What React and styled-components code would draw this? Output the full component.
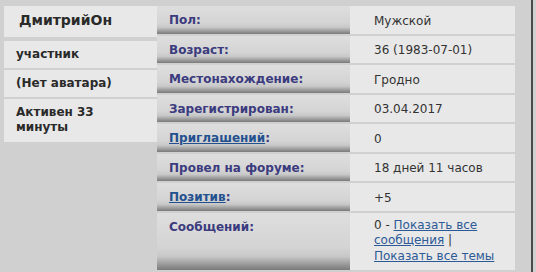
import React from "react";
import styled, { createGlobalStyle } from "styled-components";

const Global = createGlobalStyle`
  html, body { margin: 0; padding: 0; background: #d0d0d0; }
  body { font-family: "DejaVu Sans", Verdana, sans-serif; }
`;

const Page = styled.div`
  width: 533px;
  height: 272px;
  border-right: 2px solid #4a4a4a;
  display: flex;
  align-items: flex-start;
  padding: 6px 0 0 4px;
  box-sizing: border-box;
  background: #d0d0d0;
`;

const Side = styled.div`
  width: 153px;
  display: flex;
  flex-direction: column;
`;

const SideBox = styled.div`
  background: #e8e8e8;
  color: #2a2a2a;
  font-weight: bold;
  font-size: ${(p) => (p.$big ? "14px" : "12px")};
  line-height: 15px;
  padding: ${(p) => p.$pad};
  margin-bottom: ${(p) => p.$mb || "2px"};
`;

const Grid = styled.div`
  display: grid;
  grid-template-columns: 193px 165px;
  row-gap: 2px;
  font-size: 12px;
  line-height: 15px;
`;

const Label = styled.div`
  min-height: ${(p) => (p.$tall ? "57px" : "27.5px")};
  box-sizing: border-box;
  display: flex;
  align-items: ${(p) => (p.$tall ? "flex-start" : "center")};
  padding: ${(p) => (p.$tall ? "7px 0 0 12px" : "2px 0 0 12px")};
  font-weight: bold;
  color: #3b3b7e;
  background: linear-gradient(
    to bottom,
    #dedede 0%,
    #d4d4d4 60%,
    #c8c8c8 76%,
    #9a9a9a 90%,
    #7a7a7a 100%
  );
`;

const Value = styled.div`
  min-height: ${(p) => (p.$tall ? "57px" : "27.5px")};
  box-sizing: border-box;
  display: flex;
  flex-direction: column;
  justify-content: ${(p) => (p.$tall ? "flex-start" : "center")};
  padding: ${(p) => (p.$tall ? "5px 8px 5px 24px" : "3px 8px 0 24px")};
  line-height: ${(p) => (p.$tall ? "15.5px" : "15px")};
  background: #e8e8e8;
  color: #333;
`;

const LabelLink = styled.a`
  color: #23508f;
  text-decoration: underline;
`;

const ValueLink = styled.a`
  color: #2c5a97;
  text-decoration: underline;
  font-weight: normal;
`;

const rows = [
  { label: "Пол:", value: "Мужской" },
  { label: "Возраст:", value: "36 (1983-07-01)" },
  { label: "Местонахождение:", value: "Гродно" },
  { label: "Зарегистрирован:", value: "03.04.2017" },
  { link: "Приглашений", value: "0" },
  { label: "Провел на форуме:", value: "18 дней 11 часов" },
  { link: "Позитив", value: "+5" },
];

export default function App() {
  return (
    <>
      <Global />
      <Page>
        <Side>
          <SideBox $big $pad="7px 0 9px 15px" $mb="4px">ДмитрийОн</SideBox>
          <SideBox $pad="6px 0 6px 12px">участник</SideBox>
          <SideBox $pad="6px 0 6px 12px">(Нет аватара)</SideBox>
          <SideBox $pad="6px 0 7px 12px">
            Активен 33
            <br />
            минуты
          </SideBox>
        </Side>
        <Grid>
          {rows.map((r, i) => (
            <React.Fragment key={i}>
              <Label>
                {r.link ? (
                  <span>
                    <LabelLink href="#">{r.link}</LabelLink>:
                  </span>
                ) : (
                  r.label
                )}
              </Label>
              <Value>{r.value}</Value>
            </React.Fragment>
          ))}
          <Label $tall>Сообщений:</Label>
          <Value $tall>
            <span>
              0 - <ValueLink href="#">Показать все сообщения</ValueLink> |{" "}
              <ValueLink href="#">Показать все темы</ValueLink>
            </span>
          </Value>
        </Grid>
      </Page>
    </>
  );
}
